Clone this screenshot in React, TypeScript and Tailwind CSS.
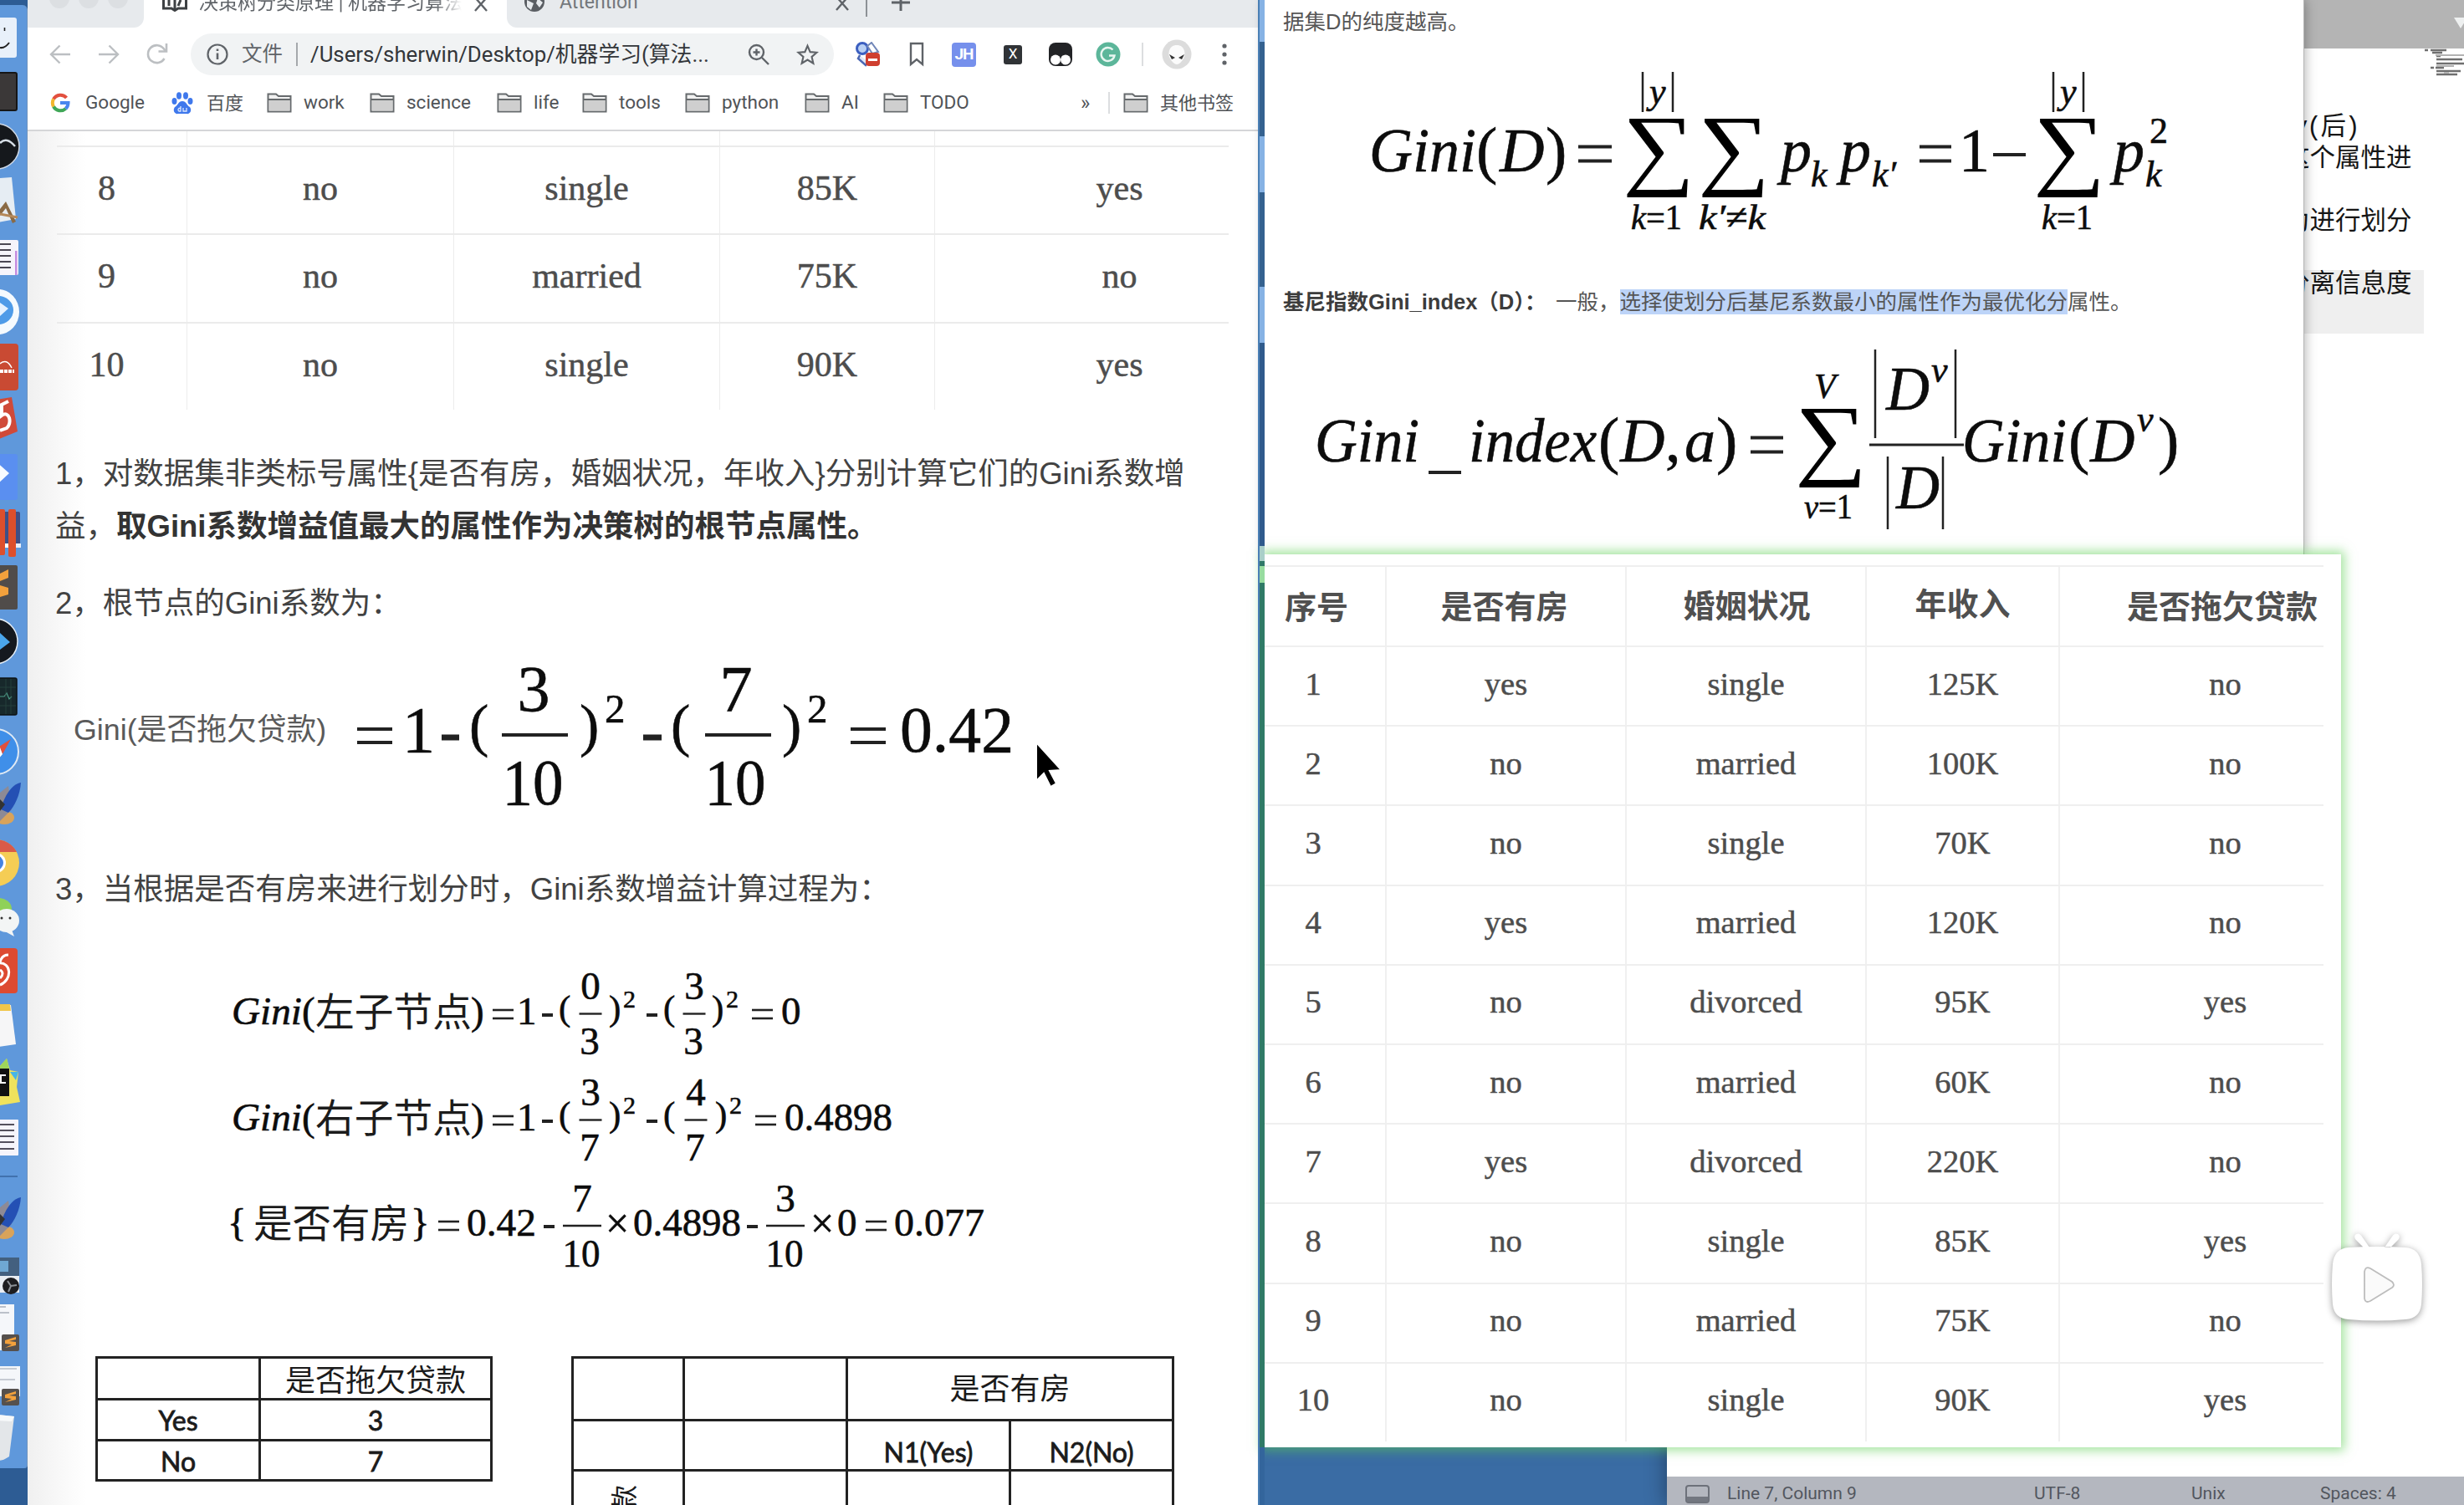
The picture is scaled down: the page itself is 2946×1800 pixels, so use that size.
import React from "react";

type Kids = { children?: React.ReactNode };

/* ---------- formula primitives ---------- */

function Fig({ x, y, w, h, children }: Kids & { x: number; y: number; w: number; h: number }) {
  return (
    <svg width={w} height={h} viewBox={`${x} ${y} ${w} ${h}`} className="block shrink-0 overflow-visible">
      {children}
    </svg>
  );
}

function T({
  x, y, s, len, i, anchor, cjk, children,
}: Kids & { x: number; y: number; s: number; len?: number; i?: boolean; anchor?: "start" | "middle"; cjk?: boolean }) {
  return (
    <text
      x={x}
      y={y}
      fontSize={s}
      textLength={len}
      lengthAdjust="spacingAndGlyphs"
      fontStyle={i ? "italic" : "normal"}
      textAnchor={anchor ?? "start"}
      className={
        cjk
          ? "fill-[#1c1c1c] [font-family:'Noto_Sans_CJK_SC',sans-serif]"
          : "fill-[#0c0c0c] stroke-[#0c0c0c] [stroke-width:0.6] [font-family:'Liberation_Serif',serif]"
      }
    >
      {children}
    </text>
  );
}

function Bar({ x1, x2, y, w = 3 }: { x1: number; x2: number; y: number; w?: number }) {
  return <line x1={x1} x2={x2} y1={y} y2={y} stroke="#222" strokeWidth={w} />;
}

function VBar({ x, y1, y2 }: { x: number; y1: number; y2: number }) {
  return <line x1={x} x2={x} y1={y1} y2={y2} stroke="#222" strokeWidth={2.5} />;
}

function Eq({ x, y, w, g, t }: { x: number; y: number; w: number; g: number; t: number }) {
  return (
    <g>
      <Bar x1={x} x2={x + w} y={y - g / 2} w={t} />
      <Bar x1={x} x2={x + w} y={y + g / 2} w={t} />
    </g>
  );
}

function Sigma({ x, y }: { x: number; y: number }) {
  return (
    <text
      transform={`translate(${x} ${y}) scale(1.26 1.13)`}
      fontSize={96}
      className="fill-black [font-family:'Liberation_Serif',serif]"
    >
      ∑
    </text>
  );
}

/* ---------- dock ---------- */

function Slot({ y, h, children }: Kids & { y: number; h: number }) {
  return (
    <svg width={32} height={h} viewBox={`0 ${y} 32 ${h}`} className="block shrink-0">
      {children}
    </svg>
  );
}

function Rocket({ y }: { y: number }) {
  return (
    <g>
      <ellipse cx="5" cy={y + 44} rx="12" ry="8" fill="#d9a35a" />
      <path d={`M0 ${y + 14} L10 ${y + 6} L14 ${y + 34} L0 ${y + 48}z`} fill="#8d8a95" />
      <path d={`M25 ${y + 2} C14 ${y + 4} 5 ${y + 18} 1 ${y + 34} L10 ${y + 38} C18 ${y + 30} 24 ${y + 16} 25 ${y + 2}z`} fill="#2450b4" />
      <path d={`M0 ${y + 22} L6 ${y + 28} L0 ${y + 36}z`} fill="#333" />
    </g>
  );
}

function SublimeBadge({ y }: { y: number }) {
  return (
    <g>
      <rect x="2" y={y} width="21" height="20" rx="2" fill="#55504d" />
      <path d={`M19 ${y + 3} L6 ${y + 7} V${y + 11} L14 ${y + 12} L6 ${y + 16} L19 ${y + 13} V${y + 9} L11 ${y + 8} L19 ${y + 6}z`} fill="#f3a13c" />
    </g>
  );
}

function Dock() {
  return (
    <aside className="absolute left-0 top-0 flex h-[1800px] w-[33px] flex-col bg-[#2d5c94]">
      <div className="mt-1.5 flex h-[1750px] flex-col rounded-tr-md rounded-br-sm border-r border-[#6f93bd] bg-[#5f98db]">
        <Slot y={6} h={72}>
          <rect x="-10" y="21" width="30" height="48" rx="3" fill="#e8f0fa" />
          <line x1="5.500" x2="5.500" y1="33" y2="37" stroke="#222" strokeWidth="1.600" />
          <path d="M0 57 Q6 58 11 51" fill="none" stroke="#222" strokeWidth="2" />
        </Slot>
        <Slot y={78} h={62}>
          <rect x="-4" y="87" width="24" height="45" rx="2" fill="#3b3838" stroke="#161616" strokeWidth="2" />
        </Slot>
        <Slot y={140} h={68}>
          <circle cx="-4" cy="175" r="27" fill="#15181c" stroke="#cfd9e6" strokeWidth="1.500" />
          <path d="M0 171 Q8 163 18 175" fill="none" stroke="#d5dde5" strokeWidth="2.500" />
        </Slot>
        <Slot y={208} h={70}>
          <path d="M-2 213 L14 212 L19 262 L-2 266z" fill="#e6edf3" />
          <path d="M0 250 L7 241 L19 265 L15 267 L7 249 L0 258z" fill="#8a6a45" />
          <line x1="0" x2="21" y1="256" y2="260" stroke="#b5895a" strokeWidth="3" />
        </Slot>
        <Slot y={278} h={62}>
          <rect x="-2" y="287" width="24" height="42" rx="2" fill="#f6f4fb" />
          <rect x="18" y="300" width="2.500" height="29" fill="#c58de0" />
          {[292, 299, 306, 313, 320].map((v) => (
            <line key={v} x1="0" x2="13" y1={v} y2={v} stroke="#4b4753" strokeWidth="2" />
          ))}
        </Slot>
        <Slot y={340} h={64}>
          <ellipse cx="-2" cy="373" rx="25" ry="27" fill="#f5fafe" />
          <ellipse cx="-2" cy="371" rx="18" ry="17" fill="#4e9be8" />
          <path d="M0 362 L10 369 L0 378z" fill="#e5f2ff" />
        </Slot>
        <Slot y={404} h={68}>
          <rect x="-6" y="411" width="28" height="56" rx="4" fill="#c94a33" />
          <path d="M0 435 Q8 428 14 440" fill="none" stroke="#fff" strokeWidth="1.500" />
          <path d="M0 444 H17" fill="none" stroke="#fff" strokeWidth="4" strokeDasharray="4 1" />
        </Slot>
        <Slot y={472} h={62}>
          <path d="M-4 478 L14 475 L21 516 L-4 526z" fill="#d04a39" />
          <path d="M10 480 L2 484 V497 C11 490 15 506 8 512 L0 515" fill="none" stroke="#fff" strokeWidth="4" />
        </Slot>
        <Slot y={534} h={70}>
          <rect x="-6" y="543" width="27" height="55" rx="3" fill="#5a8ff0" />
          <path d="M-6 551 L11 566 L-6 582z" fill="#f7fbff" />
        </Slot>
        <Slot y={604} h={66}>
          <rect x="3" y="612" width="21" height="40" rx="2" fill="#3f4f86" />
          <rect x="-2" y="609" width="8" height="55" rx="2" fill="#dd4f2c" />
          <rect x="10" y="609" width="9" height="57" rx="2" fill="#dd4f2c" />
          <rect x="6" y="650" width="4" height="5" fill="#fff" />
          <rect x="19" y="650" width="6" height="5" fill="#e9eef8" />
        </Slot>
        <Slot y={670} h={64}>
          <rect x="-4" y="676" width="25" height="53" rx="2" fill="#504c4a" />
          <path d="M10 681 L0 686 V695 L10 691z M0 700 L10 703 V711 L0 714z" fill="#f3a13c" />
        </Slot>
        <Slot y={734} h={66}>
          <circle cx="-6" cy="767" r="27" fill="#15191f" stroke="#e4edf6" strokeWidth="1.500" />
          <path d="M0 757 L12 768 L0 777z" fill="#4aa6ec" />
        </Slot>
        <Slot y={800} h={62}>
          <rect x="-4" y="811" width="24" height="44" rx="2" fill="#17282b" stroke="#0d1214" strokeWidth="1.500" />
          <path d="M0 833 H5 L8 829 L11 836 L14 833" fill="none" stroke="#4c9a86" strokeWidth="1.200" />
          <path d="M0 822 H19 M0 844 H19 M7 812 V854 M13 812 V854" stroke="#28443f" strokeWidth="0.800" />
        </Slot>
        <Slot y={862} h={70}>
          <circle cx="-5" cy="899" r="27" fill="#3f8fe9" stroke="#dfe9f4" strokeWidth="2" />
          <path d="M13 884 L-1 893 L3 902z" fill="#e0503d" />
          <path d="M0 894 L3 902 L-4 910z" fill="#fff" />
        </Slot>
        <Slot y={932} h={66}>
          <Rocket y={934} />
        </Slot>
        <Slot y={998} h={68}>
          <circle cx="-5" cy="1032" r="28" fill="#f5cd55" />
          <path d="M-5 1004 A28 28 0 0 1 20 1019 L-5 1019z" fill="#d95a48" />
          <circle cx="-5" cy="1032" r="12" fill="#fff" />
          <circle cx="-5" cy="1032" r="9" fill="#4583e0" />
        </Slot>
        <Slot y={1066} h={60}>
          <ellipse cx="-2" cy="1087" rx="16" ry="13" fill="#8fd158" />
          <ellipse cx="8" cy="1101" rx="15" ry="14" fill="#f3f5f5" />
          <path d="M14 1112 L17 1120 L6 1114z" fill="#f3f5f5" />
          <circle cx="2" cy="1098" r="1.500" fill="#333" />
          <circle cx="12" cy="1098" r="1.500" fill="#333" />
        </Slot>
        <Slot y={1126} h={68}>
          <rect x="-6" y="1134" width="27" height="54" rx="4" fill="#dd4a31" />
          <path d="M10 1142 Q2 1142 0 1151 M-2 1152 C14 1150 15 1172 0 1178 M0 1160 Q6 1164 0 1170" fill="none" stroke="#fff" strokeWidth="3" />
        </Slot>
        <Slot y={1194} h={66}>
          <path d="M-2 1202 H13 L19 1249 L-2 1252z" fill="#f6f6f7" />
          <path d="M-2 1201 H12 L13 1209 H-2z" fill="#f0c64a" />
        </Slot>
        <Slot y={1260} h={68}>
          <path d="M0 1275 L8 1266 L12 1280 L22 1282 L20 1300 L24 1318 L0 1322z" fill="#efe25d" />
          <path d="M0 1275 L8 1266 L11 1278 L0 1284z" fill="#9ed55a" />
          <path d="M12 1282 L22 1282 L19 1292z" fill="#45b5e8" />
          <rect x="-2" y="1278" width="13" height="33" fill="#111" />
          <path d="M7 1286 H1 V1295 H7" fill="none" stroke="#fff" strokeWidth="2" />
        </Slot>
        <Slot y={1328} h={60}>
          <rect x="-2" y="1339" width="24" height="43" rx="1" fill="#f5f4fb" />
          {[1345, 1352, 1359, 1366, 1374].map((v) => (
            <line key={v} x1="0" x2="17" y1={v} y2={v} stroke="#54505d" strokeWidth="2" />
          ))}
        </Slot>
        <Slot y={1388} h={38}>
          <line x1="0" x2="21" y1="1407" y2="1407" stroke="#4171ae" strokeWidth="2" />
        </Slot>
        <Slot y={1426} h={66}>
          <Rocket y={1430} />
        </Slot>
        <Slot y={1492} h={62}>
          <rect x="-2" y="1504" width="25" height="42" fill="#e9edf2" />
          <rect x="-2" y="1504" width="25" height="22" fill="#43607f" />
          <rect x="-2" y="1508" width="12" height="13" fill="#6fa8d3" />
          <circle cx="13" cy="1538" r="10" fill="#1d1d20" />
          <path d="M13 1538 L9 1532 M13 1538 L20 1537 M13 1538 L10 1545" stroke="#8b8f95" strokeWidth="2" />
        </Slot>
        <Slot y={1554} h={70}>
          <rect x="-2" y="1560" width="19" height="55" fill="#f5f7fa" />
          <path d="M0 1563 H7 M0 1570 H11" stroke="#a9b0ba" strokeWidth="1.500" />
          <SublimeBadge y={1596} />
        </Slot>
        <Slot y={1624} h={62}>
          <rect x="-2" y="1634" width="26" height="36" fill="#f5f7fa" />
          <path d="M0 1637 H20 M0 1650 H18" stroke="#b7bdc6" strokeWidth="1.500" />
          <SublimeBadge y={1661} />
        </Slot>
        <Slot y={1686} h={68}>
          <path d="M-2 1692 L17 1694 L11 1742 Q4 1747 -2 1747z" fill="#e3e6e9" />
          <path d="M-2 1692 L17 1694 L14 1700 L-2 1699z" fill="#f7f9fa" />
        </Slot>
      </div>
    </aside>
  );
}

/* ---------- browser window ---------- */

function TabStrip() {
  return (
    <div className="flex h-[33px] w-full overflow-hidden bg-white [font-family:Roboto,'Noto_Sans_CJK_SC',sans-serif]">
      <div className="flex w-[139px] items-start gap-[11px] rounded-br-xl bg-[#e7eaed] pl-[26px]">
        <i className="-mt-3.5 size-6 rounded-full bg-[#dcdfe2]" />
        <i className="-mt-3.5 size-6 rounded-full bg-[#dcdfe2]" />
        <i className="-mt-3.5 size-6 rounded-full bg-[#dcdfe2]" />
      </div>
      <div className="flex w-[434px] items-start pl-[22px]">
        <svg width="30" height="14" viewBox="0 0 30 14" className="mr-[14px] block shrink-0">
          <path d="M1.500 0 V10 H11 L15 12.500 L19 10 H28.500 V0 M15 0 V11 M8 0 V7 M22 0 L19 7" fill="none" stroke="#3d4043" strokeWidth="3" />
        </svg>
        <span className="-mt-[13px] w-[314px] overflow-hidden whitespace-nowrap bg-gradient-to-r from-[#5f6368] from-90% to-white bg-clip-text text-[23px] leading-[34px] text-transparent">
          决策树分类原理 | 机器学习算法文
        </span>
        <svg width="16" height="16" viewBox="0 0 16 16" className="ml-[15px] block">
          <path d="M1 13 L15 -3 M1 -3 L15 13" stroke="#5f6368" strokeWidth="2.400" />
        </svg>
      </div>
      <div className="flex flex-1 items-start rounded-bl-xl bg-[#e7eaed] pl-[20px]">
        <svg width="26" height="18" viewBox="0 0 26 18" className="block">
          <circle cx="13" cy="2" r="12" fill="#5a5e63" />
          <path d="M4 0 L12 4 L9 12 L4 8z M17 -2 L23 3 L19 9 L15 4z" fill="#e7eaed" />
        </svg>
        <span className="-mt-[14px] ml-[17px] w-[330px] text-[23px] leading-[34px] text-[#74787c]">Attention</span>
        <svg width="16" height="16" viewBox="0 0 16 16" className="block">
          <path d="M1 12 L15 -4 M1 -4 L15 12" stroke="#5f6368" strokeWidth="2.400" />
        </svg>
        <i className="ml-[20px] h-[20px] w-[2px] bg-[#8d9196]" />
        <svg width="22" height="14" viewBox="0 0 22 14" className="ml-[29px] block">
          <path d="M0 3 H22 M11 -8 V13" stroke="#5f6368" strokeWidth="3" />
        </svg>
      </div>
    </div>
  );
}

function Toolbar() {
  return (
    <div className="flex h-[64px] items-center pl-[26px] [font-family:Roboto,'Noto_Sans_CJK_SC',sans-serif]">
      <svg width="26" height="26" viewBox="0 0 26 26" className="mr-[32px]" fill="none" stroke="#bcbfc2" strokeWidth="2.400">
        <path d="M25 13 H2 M12.500 2.500 L2 13 L12.500 23.500" />
      </svg>
      <svg width="26" height="26" viewBox="0 0 26 26" className="mr-[31px]" fill="none" stroke="#bcbfc2" strokeWidth="2.400">
        <path d="M1 13 H24 M13.500 2.500 L24 13 L13.500 23.500" />
      </svg>
      <svg width="28" height="28" viewBox="0 0 28 28" className="mr-[26px]" fill="none" stroke="#bcbfc2" strokeWidth="2.600">
        <path d="M22.500 19 A10.500 10.500 0 1 1 22 7.500 L24 10" />
        <path d="M25 1 V10.500 H15.500" />
      </svg>
      <div className="flex h-[50px] w-[769px] items-center rounded-full bg-[#f1f3f4] pl-[19px] text-[25px]">
        <svg width="26" height="26" viewBox="0 0 26 26" fill="none" stroke="#5f6368" strokeWidth="2.200">
          <circle cx="13" cy="13" r="11.500" />
          <path d="M13 11.500 V19 M13 6.500 V9" strokeWidth="2.600" />
        </svg>
        <span className="ml-4 w-[65px] text-[24.500px] text-[#5f6368]">文件</span>
        <i className="mr-[15px] h-7 w-[2px] bg-[#a5a8ac]" />
        <span className="w-[523px] whitespace-nowrap text-[25.800px] text-[#33363a]">/Users/sherwin/Desktop/机器学习(算法...</span>
        <svg width="26" height="26" viewBox="0 0 26 26" fill="none" stroke="#5f6368" strokeWidth="2.400">
          <circle cx="10.500" cy="10.500" r="8.500" />
          <path d="M17 17 L25 25 M10.500 6.500 V14.500 M6.500 10.500 H14.500" />
        </svg>
        <svg width="27" height="27" viewBox="0 0 24 24" className="ml-[32px]" fill="none" stroke="#5f6368" strokeWidth="1.900">
          <path d="M12 2.500 L14.800 9 L21.800 9.600 L16.500 14.200 L18.100 21.100 L12 17.400 L5.900 21.100 L7.500 14.200 L2.200 9.600 L9.200 9z" />
        </svg>
      </div>
      <svg width="30" height="30" viewBox="0 0 30 30" className="ml-[26px]">
        <circle cx="8" cy="8" r="6.500" fill="#b9d0f4" stroke="#3c5fc0" strokeWidth="3" />
        <path d="M14 5 L19 1 L27 12 L20 14z" fill="#fff" stroke="#7086b8" strokeWidth="2" />
        <path d="M5 16 L3 20 L12 28 L15 24" fill="#dfe8f8" stroke="#4b67b4" strokeWidth="2.500" />
        <rect x="12" y="13" width="17" height="16" rx="4" fill="#cf3f2f" />
        <rect x="15" y="20" width="11" height="3" fill="#fff" />
      </svg>
      <svg width="18" height="30" viewBox="0 0 18 30" className="ml-[34px]" fill="none" stroke="#5f6368" strokeWidth="2.400">
        <path d="M2 2 H16 V27 L9 21 L2 27z" />
      </svg>
      <div className="ml-[33px] flex h-[29px] w-[29px] items-center justify-center rounded bg-[#7690ec] text-[19px] font-bold tracking-tighter text-white">JH</div>
      <div className="ml-[33px] flex h-[23px] w-[22px] items-center justify-center rounded-[3px] bg-[#303336] text-[17px] text-white">X</div>
      <svg width="30" height="30" viewBox="0 0 30 30" className="ml-[31px]">
        <rect x="1" y="1" width="28" height="28" rx="8" fill="#222326" />
        <circle cx="9" cy="21.500" r="6" fill="#fff" />
        <circle cx="21" cy="21.500" r="6" fill="#fff" />
      </svg>
      <svg width="30" height="30" viewBox="0 0 30 30" className="ml-[27px]">
        <circle cx="15" cy="15" r="14.500" fill="#5cb69a" />
        <path d="M20.500 9.500 A8 8 0 1 0 22.500 16.500 H16" fill="none" stroke="#e8f6f1" strokeWidth="2.400" />
      </svg>
      <i className="ml-[25px] h-7 w-[2px] bg-[#dcdee0]" />
      <svg width="36" height="36" viewBox="0 0 36 36" className="ml-[22px]">
        <circle cx="18" cy="18" r="17.500" fill="#dcdcdc" />
        <path d="M18 7 C28 7 29 18 26 23 Q22 30 18 30 Q14 30 10 23 C7 18 8 7 18 7z" fill="#fbfbfb" />
        <path d="M9 18 L16 22 L12 24z M27 18 L20 22 L24 24z" fill="#333" />
      </svg>
      <svg width="6" height="26" viewBox="0 0 6 26" className="ml-[36px]" fill="#5f6368">
        <circle cx="3" cy="3" r="2.600" />
        <circle cx="3" cy="13" r="2.600" />
        <circle cx="3" cy="23" r="2.600" />
      </svg>
    </div>
  );
}

function Folder() {
  return (
    <svg width="30" height="24" viewBox="0 0 30 24" className="mr-[14px] block shrink-0">
      <path d="M1.500 22.500 V1.500 H11 L14 4 H28.500 V22.500z" fill="#f1f1f1" stroke="#666a6d" strokeWidth="2" />
      <path d="M2.500 9 H27.500 V21.500 H2.500z" fill="#cfcfcf" />
      <path d="M1.500 8 H28.500" stroke="#666a6d" strokeWidth="2" />
    </svg>
  );
}

const folders = [
  { label: "work", box: "w-[123px]" },
  { label: "science", box: "w-[152px]" },
  { label: "life", box: "w-[102px]" },
  { label: "tools", box: "w-[123px]" },
  { label: "python", box: "w-[143px]" },
  { label: "AI", box: "w-[94px]" },
  { label: "TODO", box: "w-[236px]" },
];

function Bookmarks() {
  return (
    <div className="flex h-[52px] items-center whitespace-nowrap pl-[27px] text-[22.500px] text-[#505357] [font-family:Roboto,'Noto_Sans_CJK_SC',sans-serif]">
      <div className="flex w-[145px] items-center">
        <svg width="24" height="24" viewBox="0 0 24 24" className="mr-[18px]" fill="none" strokeWidth="4">
          <path d="M19.500 6 A9.500 9.500 0 0 0 4 7.500" stroke="#e2503f" />
          <path d="M4 7.500 A9.500 9.500 0 0 0 4 16.500" stroke="#f2b72d" />
          <path d="M4 16.500 A9.500 9.500 0 0 0 18.500 19" stroke="#3fa757" />
          <path d="M18.500 19 Q21.500 16 21.500 12 H12" stroke="#4a86ee" />
        </svg>
        Google
      </div>
      <div className="flex w-[114px] items-center">
        <svg width="26" height="27" viewBox="0 0 26 27" className="mr-[16px]" fill="#3f78ec">
          <ellipse cx="3.500" cy="11" rx="3" ry="4" />
          <ellipse cx="9" cy="4.500" rx="3" ry="4.200" />
          <ellipse cx="17" cy="4.500" rx="3" ry="4.200" />
          <ellipse cx="22.500" cy="11" rx="3" ry="4" />
          <path d="M13 11 C18 11 18 16 22 18 C25 22 22 27 18 26 H8 C4 27 1 22 4 18 C8 16 8 11 13 11z" />
          <path d="M11 17 V23 H9 Q7 21 9 19.500 H11 M14 19 V23 H18 V19" fill="none" stroke="#dbe6fd" strokeWidth="1.300" />
        </svg>
        <span className="text-[22px]">百度</span>
      </div>
      {folders.map((f) => (
        <div key={f.label} className={`flex items-center ${f.box}`}>
          <Folder />
          {f.label}
        </div>
      ))}
      <span className="w-[33px] text-[24px]">»</span>
      <i className="mr-[16px] h-[26px] w-[2px] bg-[#dcdee0]" />
      <Folder />
      <span className="text-[22px]">其他书签</span>
    </div>
  );
}

const tailRows = [
  ["8", "no", "single", "85K", "yes"],
  ["9", "no", "married", "75K", "no"],
  ["10", "no", "single", "90K", "yes"],
];

function PageTable() {
  const cell = "flex items-center justify-center border-r border-[#ececec] pb-1";
  return (
    <div className="ml-[35px] w-[1401px] text-[42px] text-[#4d4d4d] [-webkit-text-stroke:0.5px] [font-family:'Liberation_Serif',serif]">
      <div className="grid h-[17px] grid-cols-[156px_319px_318px_257px_351px]">
        {[0, 1, 2, 3].map((n) => (
          <div key={n} className="border-r border-[#ececec]" />
        ))}
      </div>
      {tailRows.map((r) => (
        <div key={r[0]} className="grid h-[105.300px] grid-cols-[156px_319px_318px_257px_351px] border-t-2 border-[#ebebeb]">
          <div className={`${cell} pr-9`}>{r[0]}</div>
          <div className={cell}>{r[1]}</div>
          <div className={cell}>{r[2]}</div>
          <div className={cell}>{r[3]}</div>
          <div className="flex items-center justify-center pb-1 pl-[90px]">{r[4]}</div>
        </div>
      ))}
    </div>
  );
}

function RootGini() {
  return (
    <Fig x={400} y={780} w={850} h={200}>
      <Eq x={427} y={880} w={42} g={16} t={4} />
      <T x={481} y={899} s={78}>1</T>
      <Bar x1={528} x2={549} y={882} w={7} />
      <T x={561} y={891} s={70}>(</T>
      <T x={638} y={850} s={78} anchor="middle">3</T>
      <Bar x1={600} x2={679} y={879} w={4} />
      <T x={637} y={962} s={78} anchor="middle" len={73}>10</T>
      <T x={693} y={891} s={70}>)</T>
      <T x={723} y={864} s={49}>2</T>
      <Bar x1={769} x2={791} y={882} w={7} />
      <T x={802} y={891} s={70}>(</T>
      <T x={880} y={850} s={78} anchor="middle">7</T>
      <Bar x1={843} x2={922} y={879} w={4} />
      <T x={879} y={962} s={78} anchor="middle" len={73}>10</T>
      <T x={935} y={891} s={70}>)</T>
      <T x={965} y={864} s={49}>2</T>
      <Eq x={1017} y={880} w={42} g={16} t={4} />
      <T x={1076} y={899} s={78} len={136}>0.42</T>
      <path d="M1239 888 L1239 934 L1248 925 L1256 941 L1263 937 L1255 922 L1269 921z" fill="#000" stroke="#fff" strokeWidth="2" />
    </Fig>
  );
}

function SmallFrac({ x, y, n, d, w = 27 }: { x: number; y: number; n: string; d: string; w?: number }) {
  return (
    <g>
      <T x={x} y={y - 30} s={47} anchor="middle">{n}</T>
      <Bar x1={x - w / 2} x2={x + w / 2} y={y - 12.5} w={2.4} />
      <T x={x - 1} y={y + 36} s={47} anchor="middle" len={d.length > 1 ? 45 : undefined}>{d}</T>
    </g>
  );
}

function NodeLine({ y, name, a, b, dx, result, len }: { y: number; name: string; a: [string, string]; b: [string, string]; dx: number; result: string; len: number }) {
  return (
    <g>
      <T x={277} y={y} s={47} i len={84}>Gini</T>
      <T x={361} y={y} s={47}>(</T>
      <T x={377} y={y + 2} s={47} cjk len={187}>{name}</T>
      <T x={563} y={y} s={47}>)</T>
      <Eq x={589} y={y - 12} w={25} g={10} t={2.6} />
      <T x={618} y={y} s={47}>1</T>
      <Bar x1={648} x2={661} y={y - 11} w={4} />
      <T x={668} y={y - 5} s={43}>(</T>
      <SmallFrac x={706} y={y} n={a[0]} d={a[1]} />
      <T x={728} y={y - 5} s={43}>)</T>
      <T x={745} y={y - 20} s={30}>2</T>
      <Bar x1={773} x2={786} y={y - 11} w={4} />
      <T x={793} y={y - 5} s={43}>(</T>
      <SmallFrac x={830 + dx / 2} y={y} n={b[0]} d={b[1]} />
      <T x={851 + dx} y={y - 5} s={43}>)</T>
      <T x={868 + dx} y={y - 20} s={30}>2</T>
      <Eq x={899 + dx} y={y - 12} w={25} g={10} t={2.6} />
      <T x={934 + dx} y={y} s={47} len={len}>{result}</T>
    </g>
  );
}

function SplitGini() {
  return (
    <Fig x={260} y={1150} w={940} h={384}>
      <NodeLine y={1225} name="左子节点" a={["0", "3"]} b={["3", "3"]} dx={0} result="0" len={23.5} />
      <NodeLine y={1352} name="右子节点" a={["3", "7"]} b={["4", "7"]} dx={4} result="0.4898" len={129} />
      <T x={272} y={1478} s={47}>{"{"}</T>
      <T x={303} y={1480} s={47} cjk len={186}>是否有房</T>
      <T x={491} y={1478} s={47}>{"}"}</T>
      <Eq x={524} y={1466} w={25} g={10} t={2.6} />
      <T x={558} y={1478} s={47} len={83}>0.42</T>
      <Bar x1={650} x2={663} y={1467} w={4} />
      <SmallFrac x={696} y={1478.5} n="7" d="10" w={46} />
      <T x={724} y={1480} s={50}>×</T>
      <T x={757} y={1478} s={47} len={129}>0.4898</T>
      <Bar x1={893} x2={906} y={1467} w={4} />
      <SmallFrac x={939} y={1478.5} n="3" d="10" w={46} />
      <T x={969} y={1480} s={50}>×</T>
      <T x={1001} y={1478} s={47}>0</T>
      <Eq x={1035} y={1466} w={25} g={10} t={2.6} />
      <T x={1069} y={1478} s={47} len={108}>0.077</T>
    </Fig>
  );
}

function CountTables() {
  return (
    <div className="flex items-start pl-[81px] text-[32px] text-[#1b1b1b] [font-family:Lato,'Noto_Sans_CJK_SC',sans-serif]">
      <div className="grid w-[475px] grid-cols-[195px_1fr] grid-rows-[50px_49px_48px] border-b-[3px] border-r-[3px] border-[#222] [&>div]:flex [&>div]:items-center [&>div]:justify-center [&>div]:border-l-[3px] [&>div]:border-t-[3px] [&>div]:border-[#222]">
        <div />
        <div className="pt-1 text-[36px]">是否拖欠贷款</div>
        <div className="pt-0.5 [-webkit-text-stroke:0.8px]">Yes</div>
        <div className="pt-0.5 [-webkit-text-stroke:0.8px]">3</div>
        <div className="pt-0.5 [-webkit-text-stroke:0.8px]">No</div>
        <div className="pt-0.5 [-webkit-text-stroke:0.8px]">7</div>
      </div>
      <div className="ml-[94px] grid w-[721px] grid-cols-[133px_195px_195px_1fr] grid-rows-[75px_60px_60px] border-r-[3px] border-[#222] [&>div]:flex [&>div]:justify-center [&>div]:border-l-[3px] [&>div]:border-t-[3px] [&>div]:border-[#222]">
        <div />
        <div />
        <div className="col-span-2 items-center text-[36px]">是否有房</div>
        <div />
        <div />
        <div className="items-end pb-[2px] leading-[36px] [-webkit-text-stroke:0.8px]">N1(Yes)</div>
        <div className="items-end pb-[2px] leading-[36px] [-webkit-text-stroke:0.8px]">N2(No)</div>
        <div className="overflow-hidden pr-2.5">
          <span className="mt-4 block size-8 -rotate-90 text-[32px] leading-8">款</span>
        </div>
        <div />
        <div />
        <div />
      </div>
    </div>
  );
}

function Browser() {
  return (
    <section className="absolute left-[33px] top-0 h-[1800px] w-[1471px] overflow-hidden bg-white">
      <TabStrip />
      <Toolbar />
      <Bookmarks />
      <main className="mt-[6px] border-t-2 border-[#d5d6d8] bg-gradient-to-r from-[#f0f0f0] to-white to-[70px] text-[36.500px] leading-[63px] text-[#424242] [font-family:'Liberation_Sans','Noto_Sans_CJK_SC',sans-serif]">
        <PageTable />
        <p className="mt-[45px] whitespace-nowrap pl-[33px]">
          1，对数据集非类标号属性{"{"}是否有房，婚姻状况，年收入{"}"}分别计算它们的Gini系数增
          <br />
          益，<b className="text-[#333]">取Gini系数增益值最大的属性作为决策树的根节点属性。</b>
        </p>
        <p className="mt-[29px] pl-[33px]">2，根节点的Gini系数为：</p>
        <div className="mt-[27px] flex h-[200px] items-start pl-[55px]">
          <span className="mt-[62px] w-[312px] whitespace-nowrap text-[35.800px] text-[#5a5a5a]">Gini(是否拖欠贷款)</span>
          <RootGini />
        </div>
        <p className="mt-[52px] pl-[33px]">3，当根据是否有房来进行划分时，Gini系数增益计算过程为：</p>
        <div className="mt-[55px] pl-[227px]">
          <SplitGini />
        </div>
        <div className="mt-[88px]">
          <CountTables />
        </div>
      </main>
    </section>
  );
}

/* ---------- editor window ---------- */

function Editor() {
  return (
    <section className="absolute left-[1993px] top-0 flex h-[1800px] w-[953px] flex-col overflow-hidden bg-white shadow-[0_0_24px_rgba(0,0,0,0.4)]">
      <div className="flex h-[58px] shrink-0 items-start justify-end bg-[#b4b4b4]">
        <svg width="12" height="14" viewBox="0 0 12 14" className="mt-[21px]">
          <path d="M0 0 H16 L8 13z" fill="#eef0f0" />
        </svg>
      </div>
      <div className="flex flex-1 items-start">
        <div className="mt-[77px] w-[905px] whitespace-pre pl-[738px] text-[30.500px] leading-[37.700px] text-[#161616] [font-family:'Liberation_Mono','Noto_Sans_CJK_SC',monospace]">
          <div className="pl-[10px] tracking-[-1.500px]">y(后)</div>
          <div>这个属性进</div>
          <div className="h-[37.700px]" />
          <div>为进行划分</div>
          <div className="h-[37.700px]" />
          <div className="-ml-[738px] h-[75.400px] bg-[#efefef] pl-[738px]">分离信息度</div>
        </div>
        <svg width="48" height="34" viewBox="0 0 48 34" className="block">
          <g stroke="#6f6f6f" strokeWidth="2.600">
            <path d="M1 2 H5 M8 2 H27 M10 5 H22" />
            <path d="M15 9 H20 M15 13 H46 M15 18 H48 M8 23 H12 M14 23 H24 M15 27 H44 M15 31 H40" />
          </g>
          <path d="M14 8 H48 M15 21 H36 M24 29 H30" stroke="#b2b2b2" strokeWidth="2" />
        </svg>
      </div>
      <div className="flex h-[34px] shrink-0 items-center whitespace-nowrap bg-[#b4b7bf] pl-[22px] pt-2 text-[21px] text-[#52565e] [font-family:Roboto,sans-serif]">
        <svg width="29" height="22" viewBox="0 0 29 22" className="mr-[21px]">
          <rect x="1" y="1" width="27" height="20" rx="3" fill="none" stroke="#6d717a" strokeWidth="2" />
          <rect x="2" y="14" width="25" height="6" fill="#737780" />
        </svg>
        <span className="w-[367px]">Line 7, Column 9</span>
        <span className="w-[188px]">UTF-8</span>
        <span className="w-[154px]">Unix</span>
        <span>Spaces: 4</span>
      </div>
    </section>
  );
}

/* ---------- floating snippets ---------- */

function GiniD() {
  return (
    <Fig x={1620} y={76} w={1000} h={210}>
      <T x={1637} y={205} s={74} i len={128}>Gini</T>
      <T x={1765} y={205} s={76}>(</T>
      <T x={1793} y={205} s={74} i>D</T>
      <T x={1848} y={205} s={76}>)</T>
      <Eq x={1887} y={184} w={40} g={17} t={4} />
      <VBar x={1964} y1={86} y2={134} />
      <T x={1972} y={124} s={44} i>y</T>
      <VBar x={2000} y1={86} y2={134} />
      <Sigma x={1940} y={213} />
      <T x={1950} y={274} s={42} i len={61}>k<tspan fontStyle="normal">=1</tspan></T>
      <Sigma x={2030} y={213} />
      <T x={2031} y={274} s={42} i len={80}>k′<tspan fontStyle="normal">≠</tspan>k</T>
      <T x={2129} y={205} s={74} i>p</T>
      <T x={2165} y={223} s={44} i>k</T>
      <T x={2200} y={205} s={74} i>p</T>
      <T x={2238} y={223} s={44} i>k′</T>
      <Eq x={2295} y={184} w={38} g={17} t={4} />
      <T x={2342} y={205} s={74}>1</T>
      <Bar x1={2383} x2={2422} y={185} w={4} />
      <VBar x={2455} y1={86} y2={134} />
      <T x={2463} y={124} s={44} i>y</T>
      <VBar x={2491} y1={86} y2={134} />
      <Sigma x={2431} y={213} />
      <T x={2441} y={274} s={42} i len={61}>k<tspan fontStyle="normal">=1</tspan></T>
      <T x={2527} y={205} s={74} i>p</T>
      <T x={2570} y={171} s={44}>2</T>
      <T x={2565} y={223} s={44} i>k</T>
    </Fig>
  );
}

function GiniIndex() {
  return (
    <Fig x={1560} y={410} w={1060} h={230}>
      <T x={1572} y={552} s={74} i len={125}>Gini</T>
      <Bar x1={1708} x2={1747} y={565} w={4} />
      <T x={1756} y={552} s={74} i len={153}>index</T>
      <T x={1911} y={552} s={76}>(</T>
      <T x={1937} y={552} s={74} i>D</T>
      <T x={1991} y={552} s={74}>,</T>
      <T x={2014} y={552} s={74} i>a</T>
      <T x={2052} y={552} s={76}>)</T>
      <Eq x={2093} y={532} w={39} g={17} t={4} />
      <T x={2169} y={476} s={42} i>V</T>
      <Sigma x={2146} y={560} />
      <T x={2157} y={620} s={42} i len={58}>v<tspan fontStyle="normal">=1</tspan></T>
      <VBar x={2242} y1={418} y2={524} />
      <T x={2255} y={490} s={74} i len={52}>D</T>
      <T x={2309} y={457} s={44} i>v</T>
      <VBar x={2338} y1={418} y2={524} />
      <Bar x1={2235} x2={2348} y={532} w={3} />
      <VBar x={2257} y1={546} y2={633} />
      <T x={2267} y={608} s={74} i len={52}>D</T>
      <VBar x={2323} y1={546} y2={633} />
      <T x={2346} y={552} s={74} i len={125}>Gini</T>
      <T x={2473} y={552} s={76}>(</T>
      <T x={2499} y={552} s={74} i>D</T>
      <T x={2555} y={516} s={44} i>v</T>
      <T x={2580} y={552} s={76}>)</T>
    </Fig>
  );
}

function FormulaSnippet() {
  return (
    <section className="absolute left-[1512px] top-0 h-[663px] w-[1243px] border-r border-[#b5b5b5] bg-white text-[25.500px] text-[#565656] shadow-[0_0_14px_rgba(0,0,0,0.35)] [font-family:'Liberation_Sans','Noto_Sans_CJK_SC',sans-serif]">
      <p className="pl-[22px] pt-[8px] leading-9">据集D的纯度越高。</p>
      <div className="mt-[32px] pl-[108px]">
        <GiniD />
      </div>
      <p className="mt-[60px] whitespace-nowrap pl-[22px] leading-[30px]">
        <b className="inline-block w-[326px] text-[#3c3c3c]">基尼指数Gini_index（D）：</b>
        一般，
        <span className="inline-block bg-[#bdd4f8] leading-[30px]">选择使划分后基尼系数最小的属性作为最优化分</span>
        属性。
      </p>
      <div className="mt-[34px] pl-[48px]">
        <GiniIndex />
      </div>
    </section>
  );
}

const dataRows = [
  ["1", "yes", "single", "125K", "no"],
  ["2", "no", "married", "100K", "no"],
  ["3", "no", "single", "70K", "no"],
  ["4", "yes", "married", "120K", "no"],
  ["5", "no", "divorced", "95K", "yes"],
  ["6", "no", "married", "60K", "no"],
  ["7", "yes", "divorced", "220K", "no"],
  ["8", "no", "single", "85K", "yes"],
  ["9", "no", "married", "75K", "no"],
  ["10", "no", "single", "90K", "yes"],
];

function TableSnippet() {
  const row = "grid grid-cols-[146px_287px_287px_231px_315px] border-t-2 border-[#efefef]";
  const cell = "flex items-center justify-center whitespace-nowrap border-r-2 border-[#f0f0f0] pb-1";
  const head = "flex items-center justify-center whitespace-nowrap border-r-2 border-[#f0f0f0]";
  return (
    <section className="absolute left-[1512px] top-[663px] h-[1068px] w-[1287px] bg-white pt-[13px] text-[38.500px] text-[#4d4d4d] shadow-[0_0_12px_4px_rgba(90,205,80,0.55)] [font-family:'Liberation_Serif','Noto_Sans_CJK_SC',serif]">
      <div className={`${row} h-[96px] w-[1266px] text-[38px] font-bold text-[#505050]`}>
        <div className={`${head} pr-[20px] pt-1`}>序号</div>
        <div className={`${head} pr-1 pt-0.5`}>是否有房</div>
        <div className={`${head} pl-0.5`}>婚姻状况</div>
        <div className={`${head} pb-1`}>年收入</div>
        <div className="flex items-center justify-center whitespace-nowrap pl-[73px] pt-0.5">是否拖欠贷款</div>
      </div>
      {dataRows.map((r) => (
        <div key={r[0]} className={`${row} h-[95.200px] w-[1266px] [-webkit-text-stroke:0.5px]`}>
          <div className={`${cell} pr-7`}>{r[0]}</div>
          <div className={cell}>{r[1]}</div>
          <div className={cell}>{r[2]}</div>
          <div className={cell}>{r[3]}</div>
          <div className="flex items-center justify-center pb-1 pl-[80px]">{r[4]}</div>
        </div>
      ))}
    </section>
  );
}

function PlayBadge() {
  return (
    <svg width="124" height="124" viewBox="0 0 124 124" className="absolute left-[2780px] top-[1468px] drop-shadow-[0_2px_4px_rgba(0,0,0,0.4)]">
      <path
        d="M37 8 Q41 6 44 11 L53 24 H46 L36 14 Q34 10 37 8z M87 8 Q83 6 80 11 L71 24 H78 L88 14 Q90 10 87 8z M28 24 Q62 22 96 24 Q113 25 115 44 Q117 68 115 92 Q113 109 96 110 Q62 113 28 110 Q11 109 9 92 Q7 68 9 44 Q11 25 28 24z"
        fill="#fff"
      />
      <path d="M47 53 V85 Q48 91 54 88 L80 72 Q84 69 80 65 L54 49 Q48 46 47 53z" fill="#fafafa" stroke="#bdbdbd" strokeWidth="1.800" />
    </svg>
  );
}

function DesktopStrip() {
  return (
    <div className="absolute left-[1504px] top-0 flex h-[1800px] w-2 flex-col border-l-2 border-[#4a7fb5]">
      <i className="h-[50px] bg-[#86b2e4]" />
      <i className="h-[113px] bg-[#34618f]" />
      <i className="h-[67px] bg-[#86b2e4]" />
      <i className="h-[113px] bg-[#34618f]" />
      <i className="h-[67px] bg-[#86b2e4]" />
      <i className="h-[243px] bg-[#2f5a8c]" />
      <i className="h-[18px] bg-[#a9cfc9]" />
      <i className="h-[6px] bg-[#2f7868]" />
      <i className="h-[20px] bg-[#97dca0]" />
      <i className="h-[1034px] bg-[#2f7a66]" />
      <i className="flex-1 bg-[#33659c]" />
    </div>
  );
}

export default function App() {
  return (
    <div className="relative h-[1800px] w-[2946px] overflow-hidden bg-[#3a6ca4]">
      <Dock />
      <Editor />
      <Browser />
      <FormulaSnippet />
      <TableSnippet />
      <DesktopStrip />
      <PlayBadge />
    </div>
  );
}
